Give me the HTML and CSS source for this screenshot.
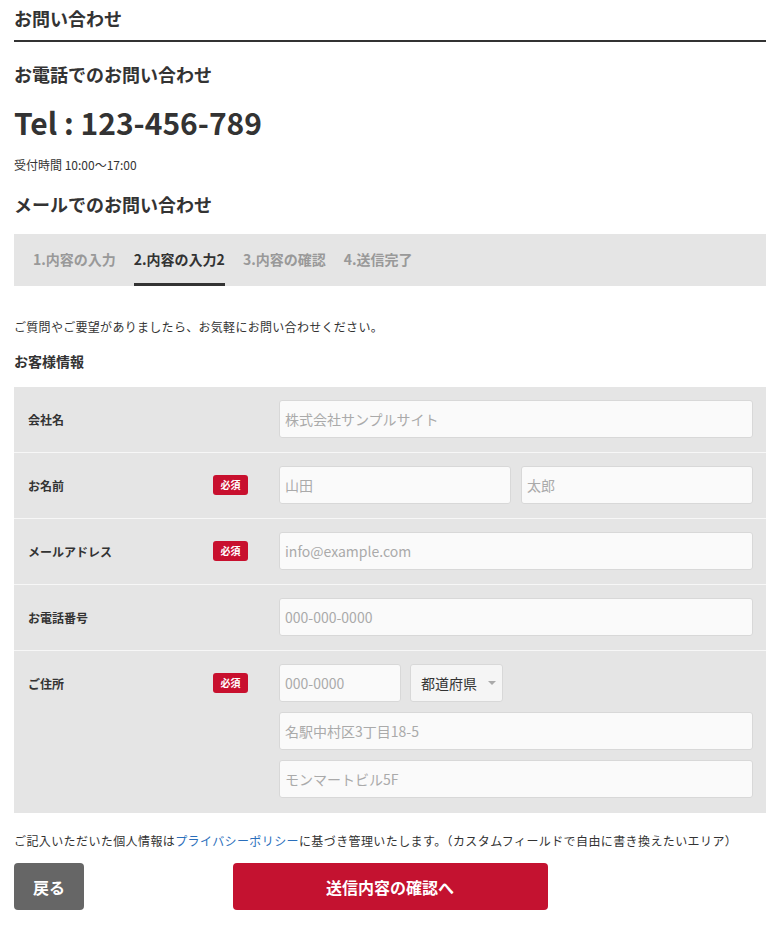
FILE: index.html
```html
<!DOCTYPE html>
<html lang="ja">
<head>
    <meta charset="utf-8">
    <link rel="stylesheet" href="styles.css">
</head>
<body>
    <div class="page-title">お問い合わせ</div>

    <div class="sub-title">お電話でのお問い合わせ</div>
    <div class="tel">Tel : 123-456-789</div>
    <div class="hours">受付時間 10:00〜17:00</div>

    <div class="sub-title sub-title-mail">メールでのお問い合わせ</div>

    <div class="steps">
        <div class="step">1.内容の入力</div>
        <div class="step active">2.内容の入力2</div>
        <div class="step">3.内容の確認</div>
        <div class="step">4.送信完了</div>
    </div>

    <p class="lead">ご質問やご要望がありましたら、お気軽にお問い合わせください。</p>

    <div class="section-title">お客様情報</div>

    <div class="form-table">
        <div class="form-row">
            <div class="form-label">
                <span>会社名</span>
            </div>
            <div class="form-field">
                <input type="text" placeholder="株式会社サンプルサイト">
            </div>
        </div>

        <div class="form-row">
            <div class="form-label">
                <span>お名前</span>
                <span class="required">必須</span>
            </div>
            <div class="form-field field-split">
                <input type="text" placeholder="山田">
                <input type="text" placeholder="太郎">
            </div>
        </div>

        <div class="form-row">
            <div class="form-label">
                <span>メールアドレス</span>
                <span class="required">必須</span>
            </div>
            <div class="form-field">
                <input type="text" placeholder="info@example.com">
            </div>
        </div>

        <div class="form-row">
            <div class="form-label">
                <span>お電話番号</span>
            </div>
            <div class="form-field">
                <input type="text" placeholder="000-000-0000">
            </div>
        </div>

        <div class="form-row">
            <div class="form-label">
                <span>ご住所</span>
                <span class="required">必須</span>
            </div>
            <div class="form-field field-stack">
                <div class="zip-line">
                    <input type="text" class="zip" placeholder="000-0000">
                    <div class="select">都道府県<span class="caret"></span></div>
                </div>
                <input type="text" placeholder="名駅中村区3丁目18-5">
                <input type="text" placeholder="モンマートビル5F">
            </div>
        </div>
    </div>

    <p class="note">ご記入いただいた個人情報は<a href="#" class="link">プライバシーポリシー</a>に基づき管理いたします。（カスタムフィールドで自由に書き換えたいエリア）</p>

    <div class="actions">
        <button class="button button-back">戻る</button>
        <button class="button button-submit">送信内容の確認へ</button>
    </div>
</body>
</html>
```

FILE: styles.css
```css
body {
    margin: 0;
    padding: 0 14px;
    font-family: "Noto Sans CJK JP", "Noto Sans", sans-serif;
    font-size: 14px;
    color: #333;
    background: #fff;
}

.page-title {
    font-size: 18px;
    font-weight: bold;
    line-height: 24px;
    padding: 6px 0 10px;
    border-bottom: 2px solid #333;
}

.sub-title {
    font-size: 18px;
    font-weight: bold;
    line-height: 24px;
    margin-top: 20px;
}

.sub-title-mail {
    margin-top: 18px;
}

.tel {
    font-size: 30px;
    font-weight: bold;
    line-height: 40px;
    margin-top: 16px;
}

.hours {
    font-size: 12px;
    line-height: 18px;
    margin-top: 14px;
}

/* steps */
.steps {
    display: flex;
    gap: 18px;
    height: 52px;
    margin-top: 18px;
    padding-left: 19px;
    background: #e5e5e5;
}

.step {
    display: flex;
    align-items: center;
    padding-top: 1px;
    font-size: 14px;
    font-weight: bold;
    color: #999;
    border-bottom: 3px solid transparent;
}

.step.active {
    color: #333;
    border-bottom-color: #333;
}

.lead {
    font-size: 12px;
    line-height: 18px;
    letter-spacing: 0.3px;
    margin: 32px 0 0;
}

.section-title {
    font-size: 14px;
    font-weight: bold;
    line-height: 20px;
    margin-top: 15px;
}

/* form */
.form-table {
    margin-top: 16px;
    background: #e5e5e5;
}

.form-row {
    display: grid;
    grid-template-columns: 265px 1fr;
    padding: 13px 13px 14px 0;
    border-bottom: 1px solid #f7f7f7;
}

.form-row:last-child {
    border-bottom: none;
    padding-bottom: 15px;
}

.form-label {
    display: flex;
    align-items: center;
    justify-content: space-between;
    height: 38px;
    padding: 0 31px 0 14px;
    font-size: 12px;
    font-weight: bold;
}

.required {
    width: 35px;
    height: 20px;
    line-height: 20px;
    text-align: center;
    background: #c8102e;
    color: #fff;
    font-size: 10px;
    font-weight: bold;
    border-radius: 3px;
}

.form-field input {
    display: block;
    width: 100%;
    height: 38px;
    padding: 0 5px;
    border: 1px solid #d8d8d8;
    border-radius: 3px;
    background: #fafafa;
    font-family: inherit;
    font-size: 14px;
    color: #333;
    box-sizing: border-box;
}

.form-field input::placeholder {
    color: #aaa;
}

.field-split {
    display: grid;
    grid-template-columns: 1fr 1fr;
    gap: 10px;
}

.field-stack {
    display: flex;
    flex-direction: column;
    gap: 10px;
}

.zip-line {
    display: flex;
    gap: 9px;
}

.form-field .zip {
    width: 122px;
}

.select {
    display: flex;
    align-items: center;
    width: 93px;
    height: 38px;
    padding: 0 0 0 10px;
    border: 1px solid #d8d8d8;
    border-radius: 3px;
    background: #f5f5f5;
    font-size: 14px;
    color: #333;
    white-space: nowrap;
    box-sizing: border-box;
}

.caret {
    margin-left: 11px;
    border-left: 4px solid transparent;
    border-right: 4px solid transparent;
    border-top: 4px solid #aaa;
}

.note {
    font-size: 12px;
    line-height: 18px;
    letter-spacing: 0.4px;
    margin: 19px 0 0;
}

.link {
    color: #2a6ebb;
    text-decoration: none;
}

/* buttons */
.actions {
    display: grid;
    grid-template-columns: 1fr 315px 1fr;
    margin-top: 13px;
}

.button {
    height: 47px;
    border: none;
    border-radius: 4px;
    color: #fff;
    font-family: inherit;
    font-size: 16px;
    font-weight: bold;
    cursor: pointer;
}

.button-back {
    justify-self: start;
    width: 70px;
    background: #666;
}

.button-submit {
    background: #c41230;
}
```
